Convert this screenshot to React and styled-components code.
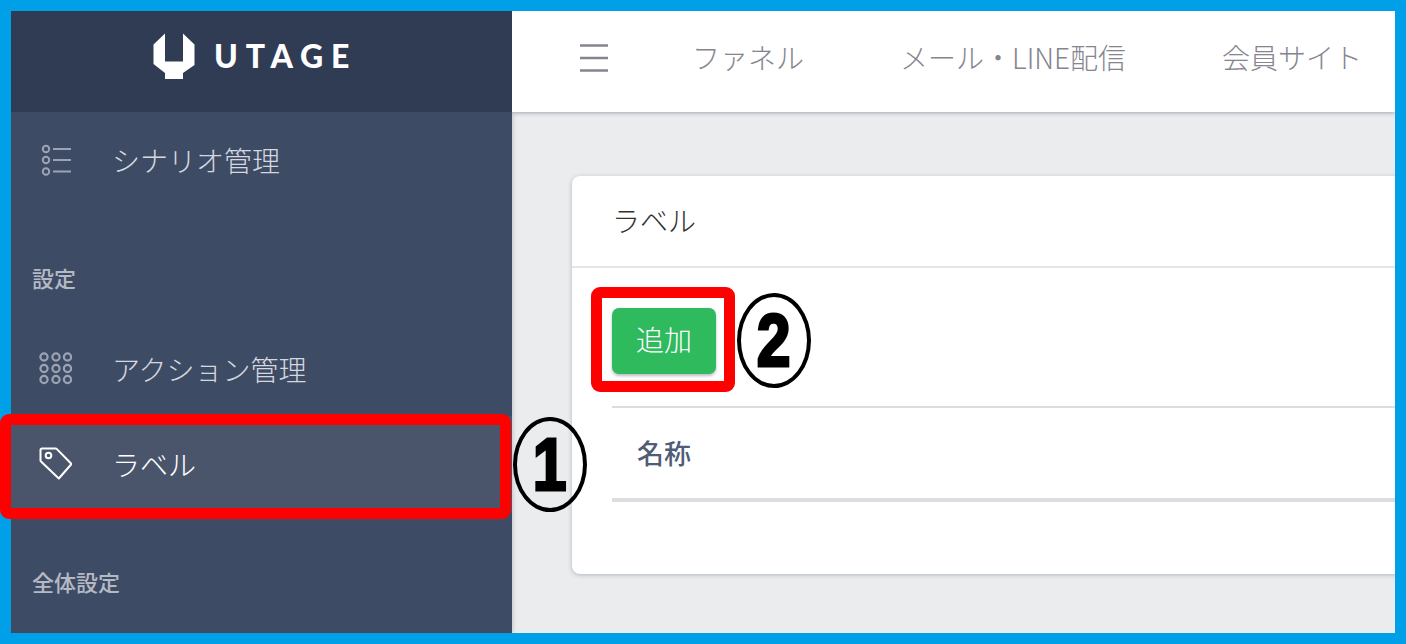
import React from "react";
import styled, { createGlobalStyle } from "styled-components";

const Global = createGlobalStyle`
  html, body { margin: 0; padding: 0; background: #00a0e9; }
  body { font-family: "Noto Sans CJK JP", "Noto Sans", sans-serif; }
  * { box-sizing: border-box; }
`;

const Page = styled.div`
  position: relative;
  width: 1406px;
  height: 644px;
  overflow: hidden;
`;

const Frame = styled.div`
  display: flex;
  width: 100%;
  height: 100%;
  border: 11px solid #00a0e9;
  background: #eaecee;
  overflow: hidden;
`;

const Sidebar = styled.aside`
  flex: 0 0 501px;
  display: flex;
  flex-direction: column;
  background: #3e4b65;
  box-shadow: 1px 0 4px rgba(40, 50, 70, 0.2);
  z-index: 1;
`;

const Brand = styled.div`
  flex: 0 0 101px;
  display: flex;
  align-items: flex-start;
  gap: 19px;
  padding: 22px 0 0 142px;
  background: #303c54;
`;

const BrandName = styled.span`
  font-family: "Lato", sans-serif;
  font-weight: 900;
  font-size: 32px;
  line-height: 46px;
  letter-spacing: 7.8px;
  color: #fff;
`;

const NavItem = styled.div`
  flex: 0 0 95px;
  display: flex;
  align-items: center;
  gap: 40px;
  padding-left: 27px;
  font-size: 28px;
  font-weight: 300;
  color: ${(p) => (p.$active ? "#ffffff" : "#d5d8df")};
  background: ${(p) => (p.$active ? "#4a556c" : "transparent")};
`;

const NavIcon = styled.svg`
  flex: 0 0 34px;
  width: 34px;
  height: 34px;
  fill: none;
`;

const SectionLabel = styled.div`
  flex: 0 0 ${(p) => p.$height}px;
  display: flex;
  align-items: flex-end;
  padding: 0 0 ${(p) => p.$bottom}px 21px;
  font-size: 22px;
  font-weight: 500;
  line-height: 30px;
  color: #b5b9c4;
`;

const Main = styled.main`
  flex: 1;
  min-width: 0;
  display: flex;
  flex-direction: column;
  overflow: hidden;
`;

const TopBar = styled.header`
  flex: 0 0 101px;
  display: flex;
  align-items: center;
  gap: 84px;
  padding: 0 0 10px 68px;
  background: #fff;
  box-shadow: 0 1px 4px rgba(70, 85, 110, 0.45);
  z-index: 1;
`;

const Burger = styled.svg`
  flex: 0 0 28px;
  width: 28px;
  height: 28px;
  margin-top: 3px;
`;

const TopNav = styled.nav`
  display: flex;
  gap: 96px;
  white-space: nowrap;
`;

const TopLink = styled.span`
  font-size: 28px;
  font-weight: 300;
  color: #85858f;
`;

const Content = styled.div`
  flex: 1;
  padding: 64px 0 0 60px;
`;

const Card = styled.section`
  width: 1000px;
  height: 398px;
  background: #fff;
  border-radius: 8px;
  box-shadow: 0 1px 4px rgba(90, 105, 130, 0.4);
`;

const CardHeader = styled.div`
  height: 92px;
  display: flex;
  align-items: center;
  padding: 0 0 2px 40px;
  border-bottom: 2px solid #e3e5e8;
  font-size: 28px;
  font-weight: 300;
  color: #333;
`;

const CardBody = styled.div`
  padding: 40px 0 0 40px;
`;

const AddButton = styled.button`
  display: block;
  width: 104px;
  height: 66px;
  padding: 0 0 4px;
  border: 0;
  border-radius: 7px;
  background: #2fba5e;
  box-shadow: 0 2px 3px rgba(60, 70, 90, 0.35);
  color: #fff;
  font-family: inherit;
  font-size: 28px;
  font-weight: 300;
`;

const NameTable = styled.div`
  margin-top: 32px;
  border-top: 2px solid #dcdde1;
  border-bottom: 4px solid #dcdde1;
  height: 96px;
  display: flex;
  align-items: center;
  padding: 0 0 2px 25px;
  font-size: 27px;
  font-weight: 500;
  color: #4f5d75;
`;

const Highlight = styled.div`
  position: absolute;
  left: ${(p) => p.$x}px;
  top: ${(p) => p.$y}px;
  width: ${(p) => p.$w}px;
  height: ${(p) => p.$h}px;
  border: 11px solid #ff0000;
  border-radius: 9px;
  z-index: 2;
`;

const Marker = styled.div`
  position: absolute;
  left: ${(p) => p.$x}px;
  top: ${(p) => p.$y}px;
  width: 74px;
  height: 95px;
  display: flex;
  align-items: center;
  justify-content: center;
  border: 4px solid #000;
  border-radius: 50%;
  z-index: 2;
`;

const MarkerDigit = styled.span`
  display: block;
  font-family: "Liberation Sans", sans-serif;
  font-size: 74px;
  font-weight: 700;
  line-height: 1;
  color: #000;
  -webkit-text-stroke: 3px #000;
  transform: scaleX(0.82);
`;

const ListIcon = () => (
  <NavIcon viewBox="0 0 34 34">
    <g stroke="#9ca4b4" strokeWidth="2">
      <circle cx="8" cy="6" r="3.2" />
      <circle cx="8" cy="17" r="3.2" />
      <circle cx="8" cy="28.5" r="3.2" />
      <path d="M15 6h18M15 17h18M15 28.5h18" />
    </g>
  </NavIcon>
);

const GridIcon = () => (
  <NavIcon viewBox="0 0 34 34">
    <g stroke="#9ca4b4" strokeWidth="2.2">
      {[6, 18, 29.5].map((x) =>
        [5, 16.5, 27.5].map((y) => <circle key={`${x}-${y}`} cx={x} cy={y} r="3.6" />)
      )}
    </g>
  </NavIcon>
);

const TagIcon = () => (
  <NavIcon viewBox="0 0 34 34">
    <path
      d="M4 1.5h13.5a2 2 0 0 1 1.4.6L33.5 17 20.8 31.5 3 14.5a1.5 1.5 0 0 1-.5-1.2V3a1.5 1.5 0 0 1 1.5-1.5z"
      stroke="#fff"
      strokeWidth="2"
      strokeLinejoin="round"
    />
    <circle cx="10.5" cy="8.5" r="2.8" stroke="#fff" strokeWidth="2" />
  </NavIcon>
);

export default function App() {
  return (
    <Page>
      <Global />
      <Frame>
        <Sidebar>
          <Brand>
            <svg width="42" height="46" viewBox="0 0 42 46" style={{ flex: "0 0 42px" }}>
              <path
                d="M12 0.5V28.5H30V0.5L41.5 11.5V32L30 40V46H12V40L0.5 31V11.5Z"
                fill="#fff"
              />
            </svg>
            <BrandName>UTAGE</BrandName>
          </Brand>
          <NavItem>
            <ListIcon />
            シナリオ管理
          </NavItem>
          <SectionLabel $height={114} $bottom={29}>設定</SectionLabel>
          <NavItem>
            <GridIcon />
            アクション管理
          </NavItem>
          <NavItem $active>
            <TagIcon />
            ラベル
          </NavItem>
          <SectionLabel $height={85} $bottom={0}>全体設定</SectionLabel>
        </Sidebar>
        <Main>
          <TopBar>
            <Burger viewBox="0 0 28 28">
              <path d="M0 1.5h28M0 14h28M0 26.5h28" stroke="#85858f" strokeWidth="2.6" />
            </Burger>
            <TopNav>
              <TopLink>ファネル</TopLink>
              <TopLink>メール・LINE配信</TopLink>
              <TopLink>会員サイト</TopLink>
            </TopNav>
          </TopBar>
          <Content>
            <Card>
              <CardHeader>ラベル</CardHeader>
              <CardBody>
                <AddButton>追加</AddButton>
                <NameTable>名称</NameTable>
              </CardBody>
            </Card>
          </Content>
        </Main>
      </Frame>
      <Highlight $x={0} $y={414} $w={511} $h={105} />
      <Marker $x={513} $y={417}><MarkerDigit>1</MarkerDigit></Marker>
      <Highlight $x={591} $y={287} $w={144} $h={105} />
      <Marker $x={737} $y={293}><MarkerDigit>2</MarkerDigit></Marker>
    </Page>
  );
}
